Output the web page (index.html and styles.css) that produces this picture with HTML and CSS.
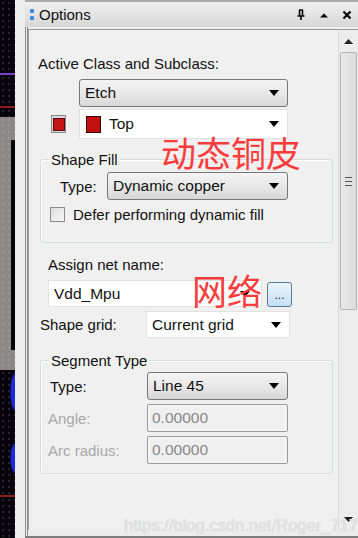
FILE: index.html
```html
<!DOCTYPE html>
<html>
<head>
  <title>Options</title>
  <link rel="stylesheet" href="styles.css">
</head>
<body>
  <div class="canvas">
    <div class="cv cv-dark" style="height:73px"></div>
    <div class="cv cv-purple"></div>
    <div class="cv cv-dark" style="height:31px"></div>
    <div class="cv cv-red"></div>
    <div class="cv cv-dark" style="height:9px"></div>
    <div class="cv cv-gray"><div class="cv-bar"></div></div>
    <div class="cv cv-dark cv-blue" style="height:125px"></div>
    <div class="cv cv-red"></div>
    <div class="cv cv-dark" style="flex:1"></div>
  </div>
  <div class="gap"></div>

  <div class="panel">
    <div class="titlebar">
      <span class="grip"><i></i><i></i></span>
      <span class="title">Options</span>
      <span class="tb-icons">
        <svg width="10" height="12" viewBox="0 0 10 12"><path d="M3 1h4M3.5 1v6M6.5 1v6M1.5 7h7M5 7v4" stroke="#000" stroke-width="1.6" fill="none"/></svg>
        <svg width="10" height="6" viewBox="0 0 10 6"><path d="M1 5.5L5 1.5L9 5.5Z" fill="#000"/></svg>
        <svg width="10" height="10" viewBox="0 0 10 10"><path d="M1.5 1.5L8.5 8.5M8.5 1.5L1.5 8.5" stroke="#000" stroke-width="2.2"/></svg>
      </span>
    </div>

    <div class="panel-body">
      <div class="frame">
        <div class="content">
          <div class="label-top">Active Class and Subclass:</div>

          <div class="class-row">
            <span></span>
            <div class="combo combo-btn"><span>Etch</span><b class="arrow"></b></div>
          </div>
          <div class="class-row">
            <span class="swatch-box"><span class="swatch"></span></span>
            <div class="combo combo-edit tall"><span class="sub-swatch"></span><span>Top</span><b class="arrow"></b></div>
          </div>

          <fieldset class="group group-fill">
            <legend>Shape Fill</legend>
            <div class="field-row">
              <label class="fill-label">Type:</label>
              <div class="combo combo-btn fill-combo"><span>Dynamic copper</span><b class="arrow"></b></div>
            </div>
            <div class="check-row">
              <span class="checkbox"></span>
              <span>Defer performing dynamic fill</span>
            </div>
          </fieldset>

          <div class="label-net">Assign net name:</div>
          <div class="net-row">
            <div class="combo combo-edit net-combo"><span>Vdd_Mpu</span><b class="arrow"></b></div>
            <button class="dots">...</button>
          </div>

          <div class="grid-row">
            <label>Shape grid:</label>
            <div class="combo combo-edit grid-combo"><span>Current grid</span><b class="arrow"></b></div>
          </div>

          <fieldset class="group group-seg">
            <legend>Segment Type</legend>
            <div class="seg-row first">
              <label>Type:</label>
              <div class="combo combo-btn"><span>Line 45</span><b class="arrow"></b></div>
            </div>
            <div class="seg-row disabled">
              <label>Angle:</label>
              <div class="textbox">0.00000</div>
            </div>
            <div class="seg-row disabled">
              <label>Arc radius:</label>
              <div class="textbox">0.00000</div>
            </div>
          </fieldset>
        </div>

        <div class="scrollbar">
          <svg class="sb-arrow" width="9" height="5" viewBox="0 0 9 5"><path d="M0 5L4.5 0L9 5Z" fill="#222"/></svg>
          <div class="thumb"><span class="thumb-grip"></span></div>
          <div class="track"></div>
          <svg class="sb-arrow" width="9" height="5" viewBox="0 0 9 5"><path d="M0 0L4.5 5L9 0Z" fill="#222"/></svg>
        </div>
      </div>
    </div>

    <div class="note note-fill">动态铜皮</div>
    <div class="note note-net">网络</div>
    <div class="watermark">https://blog.csdn.net/Roger_717</div>
  </div>
</body>
</html>
```

FILE: styles.css
```css
html, body {
  margin: 0;
  height: 538px;
  overflow: hidden;
}
body {
  display: flex;
  width: 358px;
  background: #ececec;
  font-family: "Liberation Sans", Arial, sans-serif;
  font-size: 15px;
  color: #111;
}

/* pcb canvas on the far left */
.canvas {
  width: 15px;
  display: flex;
  flex-direction: column;
}
.cv-dark {
  background-color: #06040a;
  background-image: radial-gradient(circle, #3a2a4a 0.6px, transparent 1px);
  background-size: 6px 6px;
}
.cv-purple { height: 2px; background: #7b3fd0; }
.cv-red { height: 2px; background: #8e1d1d; }
.cv-gray {
  height: 253px;
  display: flex;
  justify-content: flex-end;
  align-items: flex-start;
  background-color: #8b8886;
  background-image: radial-gradient(circle, #a39d9a 0.6px, transparent 1px);
  background-size: 6px 6px;
}
.cv-bar {
  width: 4px;
  height: 210px;
  margin-top: 23px;
  background: #050505;
}
.cv-blue {
  background-image:
    radial-gradient(ellipse 5px 20px at 15px 22px, #1c2ad8 80%, transparent 100%),
    radial-gradient(ellipse 5px 16px at 15px 88px, #1c2ad8 80%, transparent 100%),
    radial-gradient(circle, #3a2a4a 0.6px, transparent 1px);
  background-size: auto, auto, 6px 6px;
}
.gap {
  width: 10px;
  background: #ececec;
}

/* docked panel */
.panel {
  position: relative;
  flex: 1;
  display: flex;
  flex-direction: column;
  border-bottom: 2px solid #7c7c7c;
}
.titlebar {
  height: 27px;
  display: flex;
  align-items: center;
  padding-left: 5px;
  border-top: 2px solid #a8a8a8;
  background: linear-gradient(#f0f0f0, #d6d6d6);
  box-sizing: border-box;
}
.grip {
  display: flex;
  flex-direction: column;
  gap: 3px;
  margin-right: 5px;
}
.grip i {
  width: 4px;
  height: 4px;
  border-radius: 1px;
  background: #3b8be0;
}
.title {
  font-size: 15px;
  color: #111;
}
.tb-icons {
  margin-left: auto;
  display: flex;
  align-items: center;
  gap: 13px;
  padding-right: 6px;
}
.panel-body {
  flex: 1;
  display: flex;
  border-left: 3px double #8f8f8f;
  padding-top: 2px;
  padding-bottom: 6px;
}
.frame {
  flex: 1;
  display: flex;
  border-top: 1px solid #9a9a9a;
  border-left: 1px solid #9a9a9a;
  background: #f0f0f0;
}
.content {
  flex: 1;
  padding: 25px 5px 0 9px;
}

.label-top {
  height: 17px;
  margin-bottom: 7px;
}
.class-row {
  display: grid;
  grid-template-columns: 41px 209px;
  align-items: center;
  margin-bottom: 2px;
}
.swatch-box {
  width: 13px;
  height: 16px;
  margin-left: 13px;
  border: 1px solid #8a8a8a;
  background: #ddd;
  display: flex;
  align-items: center;
  justify-content: center;
}
.swatch {
  width: 10px;
  height: 11px;
  background: #c41414;
  border: 1px solid #5a0a0a;
}
.sub-swatch {
  width: 13px;
  height: 15px;
  margin-right: 8px;
  background: #c01010;
  border: 1px solid #3a0505;
}

/* combo boxes */
.combo {
  height: 28px;
  display: flex;
  align-items: center;
  padding: 0 8px 0 5px;
  box-sizing: border-box;
  font-size: 15.5px;
}
.combo .arrow {
  margin-left: auto;
  width: 0;
  height: 0;
  border-left: 5px solid transparent;
  border-right: 5px solid transparent;
  border-top: 6px solid #000;
}
.combo-btn {
  border: 1px solid #777;
  border-radius: 3px;
  background: linear-gradient(#f4f4f4 0%, #e8e8e8 50%, #d8d8d8 100%);
}
.combo-edit {
  border: 1px solid #e2e2e2;
  background: #fff;
}
.combo-edit.tall {
  height: 30px;
  padding-left: 6px;
}

/* group boxes */
.group {
  margin: 0 0 0 2px;
  padding: 0;
  width: 293px;
  box-sizing: border-box;
  border: 1px solid #d6dbde;
  border-radius: 3px;
  box-shadow: inset 1px 1px 0 #fff;
}
.group legend {
  padding: 0 2px;
  margin-left: 8px;
  line-height: 17px;
}
.group-fill {
  margin-top: 12px;
  padding-bottom: 19px;
}
.field-row {
  display: flex;
  align-items: center;
  margin-top: 4px;
}
.fill-label {
  width: 47px;
  margin-left: 19px;
}
.fill-combo {
  width: 181px;
}
.check-row {
  display: flex;
  align-items: center;
  height: 17px;
  margin-top: 6px;
  margin-left: 9px;
  gap: 8px;
}
.checkbox {
  width: 13px;
  height: 13px;
  border: 1px solid #8a8a8a;
  background: linear-gradient(135deg, #dcdcdc, #f8f8f8);
}

.label-net {
  margin: 13px 0 0 10px;
  height: 17px;
}
.net-row {
  display: flex;
  align-items: center;
  margin: 7px 0 0 10px;
}
.net-combo {
  width: 214px;
  height: 27px;
}
.net-combo .arrow {
  margin-right: 3px;
}
.dots {
  width: 25px;
  height: 25px;
  margin: 2px 0 0 5px;
  padding: 0;
  border: 1px solid #5a7a98;
  border-radius: 3px;
  background: linear-gradient(#eaf4fc, #c4dff3);
  font-size: 12px;
  line-height: 10px;
  color: #123;
}
.grid-row {
  display: flex;
  align-items: center;
  margin-top: 4px;
  margin-left: 2px;
}
.grid-row label {
  width: 106px;
}
.grid-combo {
  width: 144px;
  height: 27px;
}

.group-seg {
  margin-top: 14px;
  padding-bottom: 9px;
}
.seg-row {
  display: flex;
  align-items: center;
  margin-top: 4px;
}
.seg-row.first {
  margin-top: 3px;
}
.seg-row label {
  width: 97px;
  margin-left: 9px;
}
.seg-row .combo,
.seg-row .textbox {
  width: 141px;
}
.disabled label {
  margin-left: 7px;
  width: 99px;
  color: #a8a8a8;
}
.textbox {
  height: 28px;
  display: flex;
  align-items: center;
  padding-left: 4px;
  box-sizing: border-box;
  border: 1px solid #9a9a9a;
  border-radius: 2px;
  box-shadow: inset 0 0 0 2px #f4f4f4;
  background: #f0f0f0;
  color: #888;
  font-size: 15.5px;
}

/* scrollbar */
.scrollbar {
  width: 19px;
  display: flex;
  flex-direction: column;
  align-items: center;
  border-left: 1px solid #d8d8d8;
  background: #ececec;
}
.sb-arrow {
  margin: 9px 0 8px;
}
.thumb {
  width: 17px;
  height: 258px;
  box-sizing: border-box;
  border: 1px solid #b4b4b4;
  border-radius: 2px;
  background: linear-gradient(90deg, #eaeaea, #dcdcdc);
  display: flex;
  align-items: center;
  justify-content: center;
}
.thumb-grip {
  width: 7px;
  height: 7px;
  border-top: 1px solid #555;
  border-bottom: 1px solid #555;
  background: linear-gradient(#fff0 40%, #555 40%, #555 60%, #fff0 60%);
}
.track {
  flex: 1;
}

/* annotations over the screenshot */
.note {
  position: absolute;
  font-family: "Noto Sans CJK SC", sans-serif;
  font-size: 35px;
  line-height: 1;
  color: #fb3c3c;
}
.note-fill {
  left: 136px;
  top: 134px;
}
.note-net {
  left: 167px;
  top: 272px;
}
.watermark {
  position: absolute;
  left: 99px;
  top: 516px;
  font-size: 16.5px;
  color: #e2e2e2;
  text-shadow: 0 0 1px #c8c8c8;
  white-space: nowrap;
}
```
